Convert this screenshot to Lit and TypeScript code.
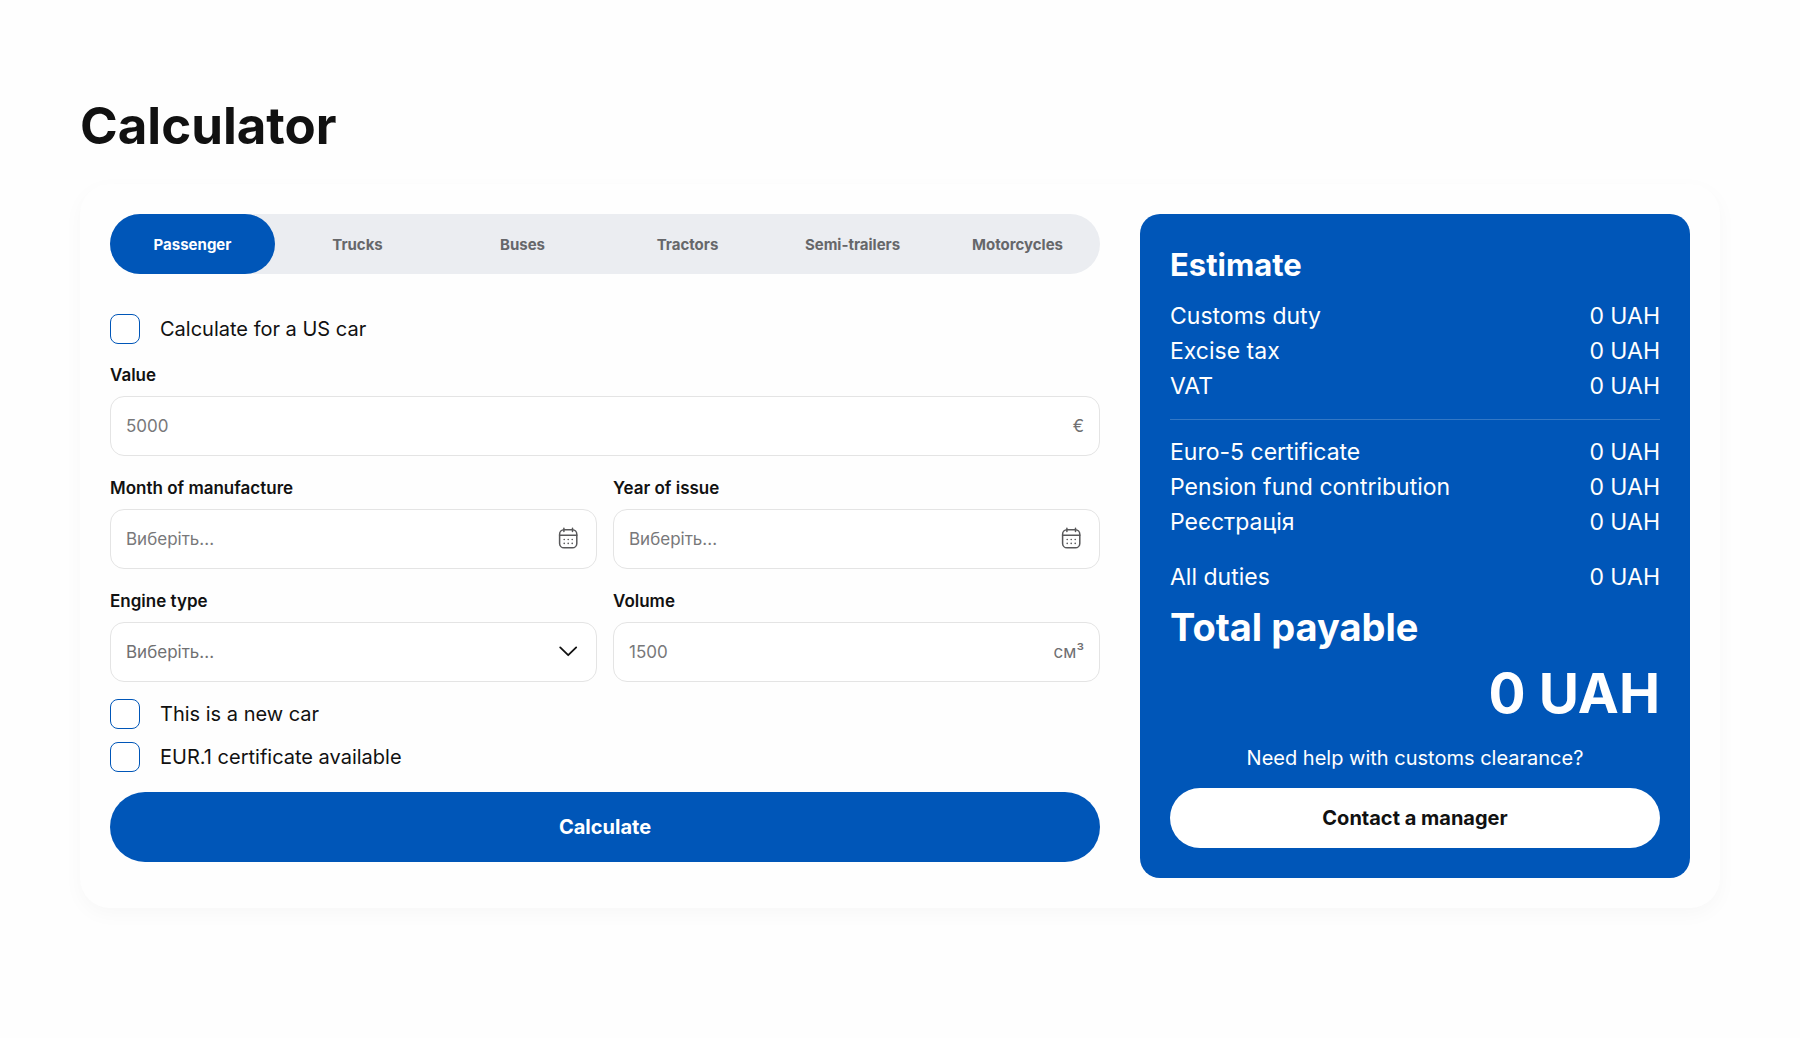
import { LitElement, html, css, svg } from "lit";
import { customElement, state } from "lit/decorators.js";
import { classMap } from "lit/directives/class-map.js";

const CATEGORIES = ["Passenger", "Trucks", "Buses", "Tractors", "Semi-trailers", "Motorcycles"];
const DUTIES = ["Customs duty", "Excise tax", "VAT"];
const FEES = ["Euro-5 certificate", "Pension fund contribution", "Реєстрація"];

const calendarIcon = html`<svg class="icon" viewBox="0 0 24 24" aria-hidden="true">
  ${svg`
    <rect x="2.6" y="2.8" width="17.2" height="18" rx="4.4" fill="none" stroke="#58585a" stroke-width="1.5" />
    <path d="M2.6 8.2H19.8M6.9 1.2V4.6M15.5 1.2V4.6" fill="none" stroke="#58585a" stroke-width="1.5" stroke-linecap="round" />
    <path d="M7.2 12.5h.01M11.2 12.5h.01M15.2 12.5h.01M7.2 16.4h.01M11.2 16.4h.01M15.2 16.4h.01" fill="none" stroke="#58585a" stroke-width="1.6" stroke-linecap="round" />
  `}
</svg>`;

const chevronIcon = html`<svg class="icon" viewBox="0 0 24 24" aria-hidden="true">
  <path d="M3.2 7.4L11.2 15.2L19.2 7.4" fill="none" stroke="#111" stroke-width="1.8" stroke-linecap="round" stroke-linejoin="round" />
</svg>`;

@customElement("app-root")
export class AppRoot extends LitElement {
  @state() private category = CATEGORIES[0];

  static styles = css`
    :host {
      display: block;
      min-height: 100vh;
      box-sizing: border-box;
      padding: 94px 80px 40px;
      background: #fefefe;
      color: #111;
      font-family: Inter, "Liberation Sans", sans-serif;
    }
    * {
      box-sizing: border-box;
    }
    button,
    input,
    select {
      font: inherit;
      color: inherit;
      margin: 0;
    }
    h1,
    h2,
    p,
    dl,
    dd {
      margin: 0;
    }
    .title {
      font-size: 51px;
      line-height: 64px;
      font-weight: 700;
    }
    .panel {
      display: grid;
      grid-template-columns: 99fr 55fr;
      gap: 40px;
      margin-top: 26px;
      padding: 30px;
      border-radius: 30px;
      background: #fefefe;
      box-shadow: 0 6px 20px rgba(0, 0, 0, 0.03);
    }
    .form {
      display: flex;
      flex-direction: column;
    }
    .tabs {
      display: grid;
      grid-template-columns: repeat(6, 1fr);
      margin-bottom: 40px;
      border-radius: 30px;
      background: #ebedf1;
    }
    .tab {
      height: 60px;
      padding: 0;
      border: 0;
      border-radius: 30px;
      background: none;
      color: #66676a;
      font-size: 15px;
      font-weight: 700;
      cursor: pointer;
    }
    .tab.active {
      background: #0056b8;
      color: #fff;
    }
    .check {
      display: flex;
      align-items: center;
      gap: 20px;
      font-size: 20px;
      line-height: 30px;
    }
    .box {
      appearance: none;
      width: 30px;
      height: 30px;
      border: 1px solid #0056b8;
      border-radius: 8px;
      background: #fff;
    }
    .box:checked {
      background: #0056b8;
    }
    .fields {
      display: grid;
      grid-template-columns: 1fr 1fr;
      gap: 21px 16px;
      margin: 20px 0 17px;
    }
    .field {
      display: flex;
      flex-direction: column;
      gap: 10px;
    }
    .field.wide {
      grid-column: 1 / -1;
    }
    .label {
      font-size: 17px;
      line-height: 22px;
      font-weight: 600;
    }
    .control {
      display: grid;
      grid-template-columns: 1fr auto;
      align-items: center;
      height: 60px;
      padding-right: 15px;
      border: 1px solid #e4e4e4;
      border-radius: 14px;
      background: #fff;
      color: #707072;
      font-size: 17px;
    }
    .input {
      grid-row: 1;
      grid-column: 1;
      width: 100%;
      height: 58px;
      padding: 0 15px;
      border: 0;
      border-radius: 14px;
      background: none;
      appearance: none;
      outline-color: #0056b8;
    }
    .input.spanning {
      grid-column: 1 / -1;
    }
    .input::placeholder {
      color: #78787a;
      opacity: 1;
    }
    .icon {
      grid-row: 1;
      grid-column: 2;
      display: block;
      width: 24px;
      height: 24px;
      pointer-events: none;
    }
    .checks {
      display: flex;
      flex-direction: column;
      gap: 13px;
      margin-bottom: 20px;
    }
    .submit,
    .contact {
      border: 0;
      border-radius: 35px;
      font-size: 20px;
      font-weight: 700;
      cursor: pointer;
    }
    .submit {
      height: 70px;
      background: #0056b8;
      color: #fff;
    }
    .estimate {
      display: flex;
      flex-direction: column;
      padding: 30px;
      border-radius: 20px;
      background: #0056b8;
      color: #fff;
    }
    .heading {
      margin-bottom: 13px;
      font-size: 31px;
      line-height: 42px;
      font-weight: 700;
    }
    .rows {
      font-size: 23px;
      line-height: 35px;
    }
    .row {
      display: flex;
      justify-content: space-between;
    }
    .rows.fees {
      margin-top: 15px;
      padding-top: 15px;
      border-top: 1px solid #3378c6;
    }
    .rows.all {
      margin-top: 20px;
    }
    .total {
      margin-top: 7px;
      font-size: 38px;
      line-height: 50px;
      font-weight: 700;
    }
    .sum {
      margin-top: 6px;
      font-size: 55px;
      line-height: 70px;
      font-weight: 700;
      text-align: right;
    }
    .help {
      margin-top: 15px;
      font-size: 20px;
      line-height: 30px;
      text-align: center;
    }
    .contact {
      height: 60px;
      margin-top: 15px;
      background: #fff;
      color: #111;
    }
  `;

  private rows(names: string[], extra = "") {
    return html`<dl class="rows ${extra}">
      ${names.map((name) => html`<div class="row"><dt>${name}</dt><dd>0 UAH</dd></div>`)}
    </dl>`;
  }

  render() {
    return html`
      <main>
        <h1 class="title">Calculator</h1>
        <div class="panel">
          <form class="form" @submit=${(e: Event) => e.preventDefault()}>
            <div class="tabs" role="tablist">
              ${CATEGORIES.map(
                (name) => html`<button
                  type="button"
                  role="tab"
                  aria-selected=${name === this.category}
                  class=${classMap({ tab: true, active: name === this.category })}
                  @click=${() => (this.category = name)}
                >${name}</button>`
              )}
            </div>
            <label class="check"><input class="box" type="checkbox" />Calculate for a US car</label>
            <div class="fields">
              <div class="field wide">
                <label class="label" for="value">Value</label>
                <div class="control">
                  <input class="input" id="value" inputmode="numeric" placeholder="5000" />
                  <span>€</span>
                </div>
              </div>
              <div class="field">
                <label class="label" for="month">Month of manufacture</label>
                <div class="control">
                  <input class="input" id="month" placeholder="Виберіть..." />
                  ${calendarIcon}
                </div>
              </div>
              <div class="field">
                <label class="label" for="year">Year of issue</label>
                <div class="control">
                  <input class="input" id="year" placeholder="Виберіть..." />
                  ${calendarIcon}
                </div>
              </div>
              <div class="field">
                <label class="label" for="engine">Engine type</label>
                <div class="control">
                  <select class="input spanning" id="engine">
                    <option>Виберіть...</option>
                  </select>
                  ${chevronIcon}
                </div>
              </div>
              <div class="field">
                <label class="label" for="volume">Volume</label>
                <div class="control">
                  <input class="input" id="volume" inputmode="numeric" placeholder="1500" />
                  <span>см³</span>
                </div>
              </div>
            </div>
            <div class="checks">
              <label class="check"><input class="box" type="checkbox" />This is a new car</label>
              <label class="check"><input class="box" type="checkbox" />EUR.1 certificate available</label>
            </div>
            <button class="submit" type="submit">Calculate</button>
          </form>
          <section class="estimate">
            <h2 class="heading">Estimate</h2>
            ${this.rows(DUTIES)} ${this.rows(FEES, "fees")} ${this.rows(["All duties"], "all")}
            <h2 class="total">Total payable</h2>
            <p class="sum">0 UAH</p>
            <p class="help">Need help with customs clearance?</p>
            <button class="contact" type="button">Contact a manager</button>
          </section>
        </div>
      </main>
    `;
  }
}
